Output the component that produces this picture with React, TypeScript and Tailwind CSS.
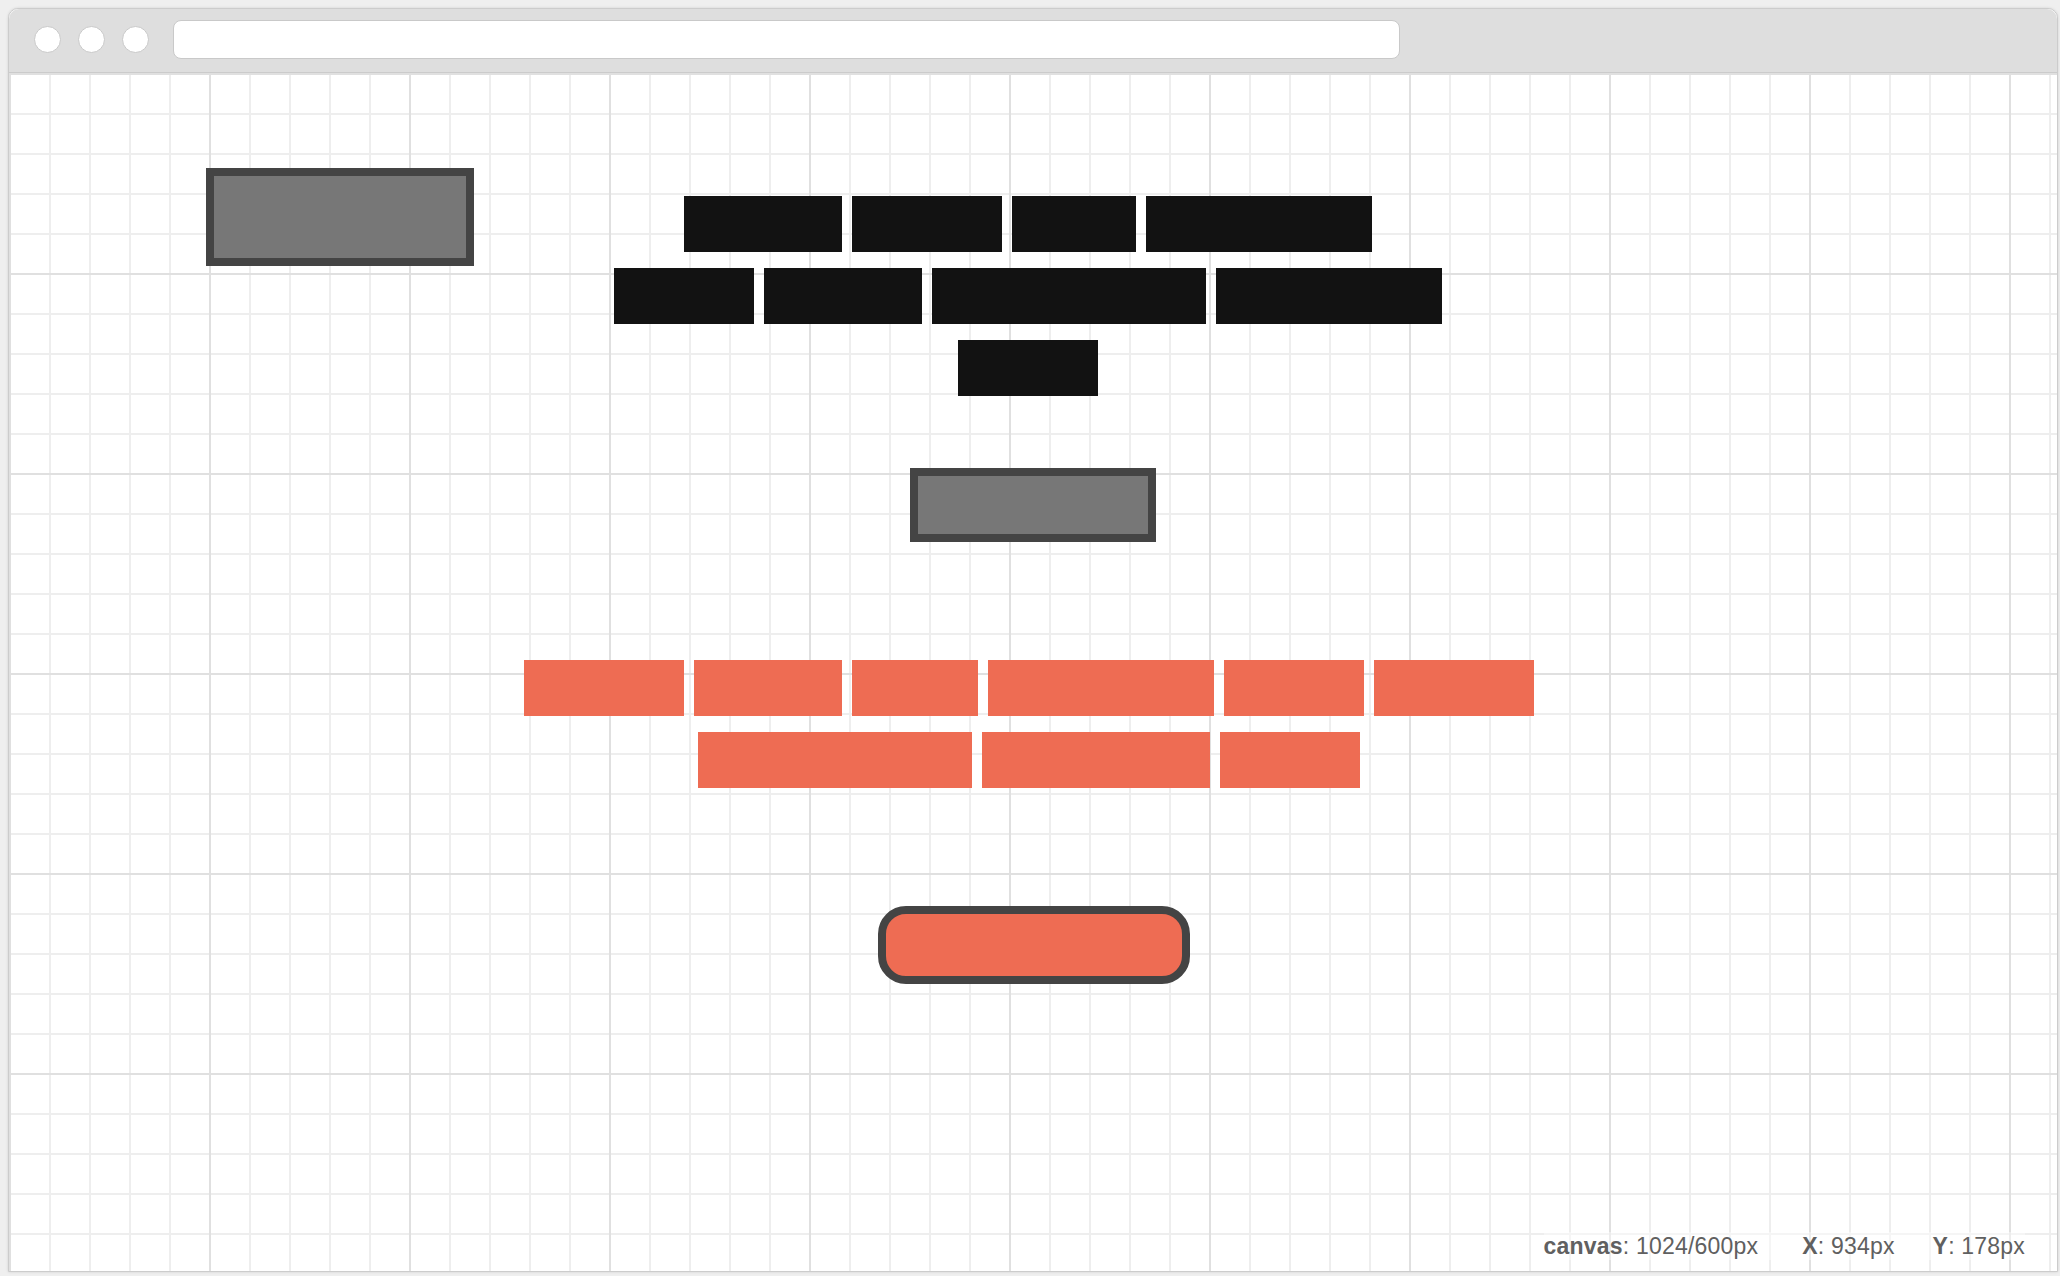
const headingRows = [
  [158, 150, 124, 226],
  [140, 158, 274, 226],
  [140],
];

const linkRows = [
  [160, 148, 126, 226, 140, 160],
  [274, 228, 140],
];

// one wireframe "word" block, trailing margin acts like the space after a word
const Word = ({ width, color }: { width: number; color: string }) => (
  <div className={`h-[56px] mr-[10px] shrink-0 ${color}`} style={{ width }} />
);

const TrafficLight = () => (
  <div className="w-[27px] h-[27px] rounded-full bg-white border-[1.5px] border-[#c9c9c9]" />
);

const App = () => {
  return (
    <div className="w-[2060px] h-[1276px] bg-[#efefef] pt-[8px] pl-[8px] overflow-hidden font-['Liberation_Sans',Arial,sans-serif]">
      <div className="w-[2050px] border border-[#cccccc] rounded-t-[10px] bg-white shadow-[0_0_3px_rgba(0,0,0,0.12)]">
        {/* title bar */}
        <div className="h-[64px] bg-[#dedede] rounded-t-[10px] border-b border-[#cbcbcb] flex items-center pl-[25px] pb-[2px]">
          <div className="flex gap-[17px]">
            <TrafficLight />
            <TrafficLight />
            <TrafficLight />
          </div>
          <div className="ml-[24px] w-[1227px] h-[39px] bg-white border-[1.5px] border-[#c9c9c9] rounded-[8px] mb-[1px]" />
        </div>

        {/* canvas */}
        <div className="relative h-[1198px] bg-white bg-[linear-gradient(to_right,#e0e0e0_2px,transparent_2px),linear-gradient(to_bottom,#e0e0e0_2px,transparent_2px),linear-gradient(to_right,#eeeeee_2px,transparent_2px),linear-gradient(to_bottom,#eeeeee_2px,transparent_2px)] [background-size:200px_200px,200px_200px,40px_40px,40px_40px]">
          <div className="grid grid-cols-[1fr_auto_1fr]">
            <div className="pl-[197px] pt-[95px]">
              <div className="w-[268px] h-[98px] border-[8px] border-[#444444] bg-[#777777]" />
            </div>

            <div className="flex flex-col items-center pt-[123px]">
              <div className="flex flex-col items-center gap-[16px]">
                {headingRows.map((row, i) => (
                  <div key={i} className="flex">
                    {row.map((w, j) => (
                      <Word key={j} width={w} color="bg-[#121212]" />
                    ))}
                  </div>
                ))}
              </div>

              <div className="mt-[72px] w-[246px] h-[74px] border-[8px] border-[#444444] bg-[#777777]" />

              <div className="mt-[118px] ml-[2px] flex flex-col items-center gap-[16px]">
                {linkRows.map((row, i) => (
                  <div key={i} className="flex">
                    {row.map((w, j) => (
                      <Word key={j} width={w} color="bg-[#ee6c53]" />
                    ))}
                  </div>
                ))}
              </div>

              <div className="mt-[118px] ml-[2px] w-[312px] h-[78px] border-[8px] border-[#444444] rounded-[28px] bg-[#ee6c53]" />
            </div>

            <div />
          </div>

          {/* status readout */}
          <div className="absolute right-[32px] bottom-[11px] flex items-center text-[23px] leading-[28px] tracking-[0.2px] text-[#606060] bg-white/40">
            <span>
              <span className="font-bold">canvas</span>: 1024/600px
            </span>
            <span className="ml-[44px]">
              <span className="font-bold">X</span>: 934px
            </span>
            <span className="ml-[38px]">
              <span className="font-bold">Y</span>: 178px
            </span>
          </div>
        </div>
      </div>
    </div>
  );
};

export default App;
